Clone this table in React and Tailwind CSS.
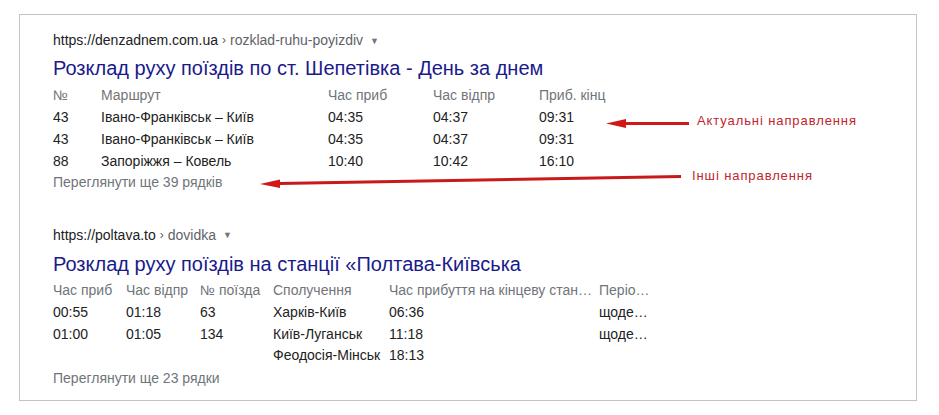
import React from "react";

const font = { fontFamily: '"Liberation Sans", Arial, sans-serif' };

function Url({ host, path }) {
  return (
    <div className="flex items-center h-5 text-[14px] leading-5">
      <span className="text-[#202124]">{host}</span>
      <span className="text-[#5f6368] px-[4px] text-[12px]">›</span>
      <span className="text-[#5f6368]">{path}</span>
      <span className="text-[#70757a] text-[9px] ml-[7px] mt-[1px]">▼</span>
    </div>
  );
}

function Row({ cols, cells, head }) {
  return (
    <div className={`flex h-[21.75px] items-center text-[14px] ${head ? "text-[#70757a]" : "text-[#222]"}`}>
      {cells.map((c, i) => (
        <div key={i} className={`${cols[i]} shrink-0 truncate pr-[4px]`}>
          {c}
        </div>
      ))}
    </div>
  );
}

export default function App() {
  const c1 = ["w-[48px]", "w-[227px]", "w-[105px]", "w-[106px]", "w-[100px]"];
  const c2 = ["w-[73px]", "w-[74px]", "w-[73px]", "w-[116px]", "w-[210px]", "w-[60px]"];

  return (
    <div className="w-[939px] h-[415px] bg-white pt-[14px] pl-[19px]" style={font}>
      <div className="relative w-[898px] h-[387px] border border-[#c4c4c4] pl-[33px] pt-[15px]">
        {/* result 1 */}
        <Url host="https://denzadnem.com.ua" path="rozklad-ruhu-poyizdiv" />
        <div className="mt-[5px] text-[20px] leading-[26px] text-[#1a1a8c]">
          Розклад руху поїздів по ст. Шепетівка - День за днем
        </div>
        <div className="mt-[4px]">
          <Row head cols={c1} cells={["№", "Маршрут", "Час приб", "Час відпр", "Приб. кінц"]} />
          <Row cols={c1} cells={["43", "Івано-Франківськ – Київ", "04:35", "04:37", "09:31"]} />
          <Row cols={c1} cells={["43", "Івано-Франківськ – Київ", "04:35", "04:37", "09:31"]} />
          <Row cols={c1} cells={["88", "Запоріжжя – Ковель", "10:40", "10:42", "16:10"]} />
          <div className="h-[21.75px] flex items-center text-[14px] text-[#70757a]">Переглянути ще 39 рядків</div>
        </div>

        {/* result 2 */}
        <div className="mt-[31px]">
          <Url host="https://poltava.to" path="dovidka" />
        </div>
        <div className="mt-[6px] text-[20px] leading-[26px] text-[#1a1a8c]">
          Розклад руху поїздів на станції «Полтава-Київська
        </div>
        <div className="mt-[3px]">
          <Row
            head
            cols={c2}
            cells={["Час приб", "Час відпр", "№ поїзда", "Сполучення", "Час прибуття на кінцеву стан…", "Періо…"]}
          />
          <Row cols={c2} cells={["00:55", "01:18", "63", "Харків-Київ", "06:36", "щоде…"]} />
          <Row cols={c2} cells={["01:00", "01:05", "134", "Київ-Луганськ", "11:18", "щоде…"]} />
          <Row cols={c2} cells={["", "", "", "Феодосія-Мінськ", "18:13", ""]} />
          <div className="h-[21.75px] flex items-center text-[14px] text-[#70757a] mt-[1px]">Переглянути ще 23 рядки</div>
        </div>

        {/* annotations */}
        <svg className="absolute left-0 top-0 pointer-events-none" width="898" height="387">
          <line x1="603" y1="108.5" x2="669" y2="108.5" stroke="#d01818" strokeWidth="3" />
          <polygon points="586,108.5 606,104 606,113" fill="#d01818" />
          <path d="M259 168.5 L661 161.5" stroke="#c81a1a" strokeWidth="3" fill="none" />
          <polygon points="240,169 260,164.5 260,173" fill="#d01818" />
        </svg>
        <div className="absolute left-[677px] top-[96px] text-[13px] tracking-[0.9px] text-[#c0262c]">
          Актуальні направлення
        </div>
        <div className="absolute left-[672px] top-[151px] text-[13px] tracking-[0.9px] text-[#c0262c]">
          Інші направлення
        </div>
      </div>
    </div>
  );
}
